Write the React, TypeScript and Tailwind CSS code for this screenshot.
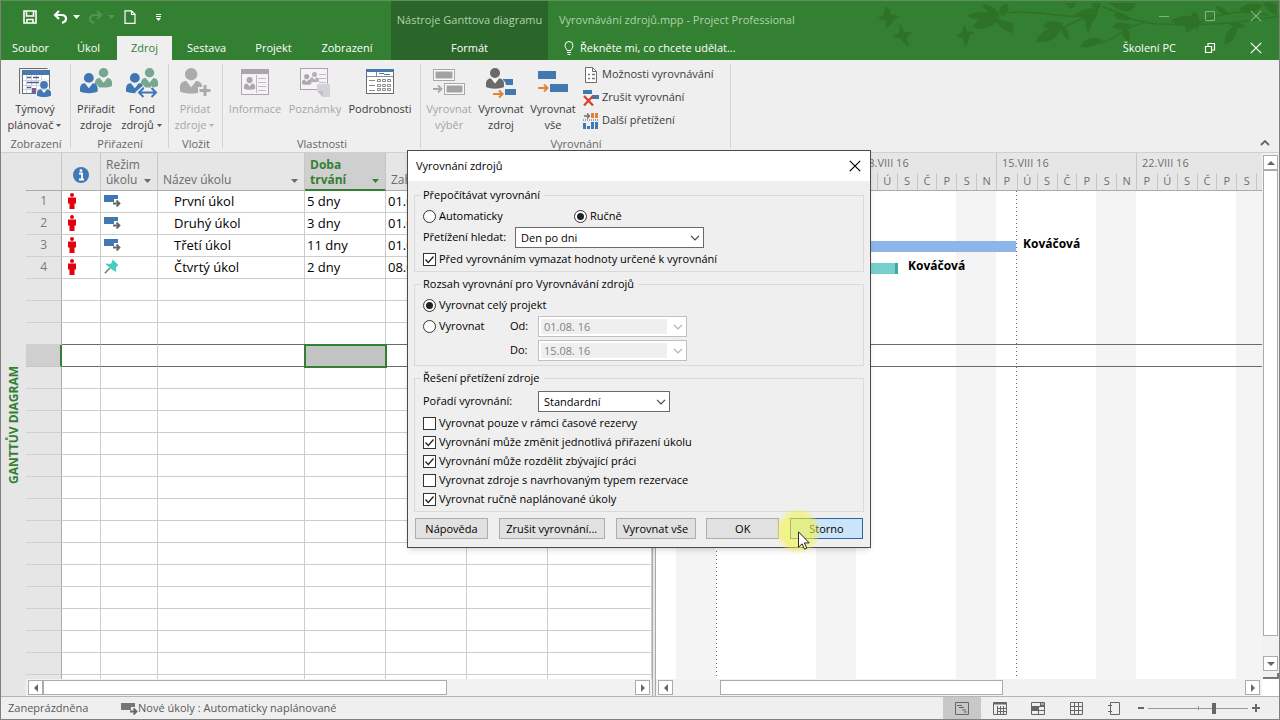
import React from 'react';
import { clsx } from 'clsx';

/* ---------- small glyphs ---------- */

const Caret = ({ className }: { className?: string }) => (
  <svg viewBox="0 0 7 4" className={clsx('h-1 w-[7px] shrink-0 fill-current', className)}>
    <path d="M0 0h7L3.500 4z" />
  </svg>
);

const Chevron = ({ className }: { className?: string }) => (
  <svg viewBox="0 0 10 6" className={clsx('pointer-events-none h-[6px] w-[10px] shrink-0', className)}>
    <path d="M1 .8l4 4 4-4" fill="none" stroke="currentColor" strokeWidth="1.200" />
  </svg>
);

const CloseGlyph = ({ className }: { className?: string }) => (
  <svg viewBox="0 0 12 12" className={clsx('h-3 w-3', className)}>
    <path d="M.8.8l10.400 10.400M11.200.8L.8 11.200" fill="none" stroke="currentColor" strokeWidth="1.200" />
  </svg>
);

/* ---------- ribbon icons ---------- */

const person = (x: number, y: number, fill: string, scale = 1) => (
  <g transform={`translate(${x} ${y}) scale(${scale})`} fill={fill}>
    <circle cx="9" cy="5" r="5" />
    <path d="M0 19v-3.500c0-3 2-5 5-5l4 5 4-5c3 0 5 2 5 5V19c-5 2.200-13 2.200-18 0z" />
  </g>
);

const TeamPlannerIcon = () => (
  <svg viewBox="0 0 32 32" className="h-8 w-8">
    <path d="M.5 27V1.500h28" fill="none" stroke="#6d6d6d" />
    <rect x="3.500" y="3.500" width="27" height="23" fill="#fff" stroke="#6d6d6d" />
    <rect x="3" y="3" width="28" height="5" fill="#4a78ae" />
    <path d="M7.500 8v18M12.500 8v18M17.500 8v18M22.500 8v18M4 13.500h26M4 18.500h26M4 22.500h26" stroke="#d0d0d8" />
    <path d="M8 10.500h4M14 10.500h6M8 15.500h9M8 20.500h4M14 15.500h6" stroke="#4a5f95" strokeWidth="1.500" />
    <rect x="13" y="21" width="4" height="5" fill="#7b5c99" />
    {person(17, 12, '#efefef', 0.9)}
    {person(18, 14, '#4178b5', 0.78)}
  </svg>
);

const AssignIcon = () => (
  <svg viewBox="0 0 32 32" className="h-8 w-8">
    {person(15, 1, '#76a78f', 0.95)}
    {person(-1, 5, '#efefef', 1.120)}
    {person(0, 6, '#3f76b5', 0.98)}
  </svg>
);

const PoolIcon = () => (
  <svg viewBox="0 0 32 32" className="h-8 w-8">
    {person(15, 1, '#76a78f', 0.95)}
    {person(-1, 5, '#efefef', 1.120)}
    {person(0, 6, '#3f76b5', 0.98)}
    <path d="M9 25.500l8-7v4h8v-4l7 7-7 6.500v-3.500h-8V32z" fill="#efefef" />
    <path d="M17.500 21L13 25.500l4.500 4.500M13.500 25.500h16M25.500 21l4.500 4.500-4.500 4.500" fill="none" stroke="#3f76b5" strokeWidth="2" />
  </svg>
);

const AddResourceIcon = () => (
  <svg viewBox="0 0 32 32" className="h-8 w-8">
    {person(1, 1, '#ababab', 1.240)}
    <path d="M19 20h4v-4h6v4h3v6h-3v4h-6v-4h-4z" fill="#efefef" />
    <path d="M24.500 18h3v4h4v3h-4v4h-3v-4h-4v-3h4z" fill="#ababab" />
  </svg>
);

const InfoCardIcon = () => (
  <svg viewBox="0 0 32 32" className="h-8 w-8">
    <rect x="2.500" y="2.500" width="27" height="25" fill="#f7f1f8" stroke="#aca5ad" />
    <rect x="2" y="2" width="28" height="5" fill="#aaa5ab" />
    {person(5, 10, '#aaa', 0.62)}
    <path d="M17.500 8v18" stroke="#bbb" />
    <path d="M19 11.500h8M19 15.500h8M19 19.500h8M19 23.500h8" stroke="#c4bcc5" />
  </svg>
);

const NotesIcon = () => (
  <svg viewBox="0 0 32 32" className="h-8 w-8">
    <rect x="1.500" y="1.500" width="27" height="21" fill="#f7f1f8" stroke="#aca5ad" />
    {person(11, 5, '#b2b2b2', 0.5)}
    {person(3, 7, '#aaa', 0.52)}
    <path d="M20 7.500h7M20 11.500h7M20 15.500h7" stroke="#c4bcc5" />
    <path d="M18 17h13v13h-7l-6-6z" fill="#d4d2d8" />
    <path d="M18 24h6v6z" fill="#c2c0c7" />
  </svg>
);

const DetailsIcon = () => (
  <svg viewBox="0 0 32 32" className="h-8 w-8">
    <rect x="2.500" y="2.500" width="27" height="24" fill="#fff" stroke="#6d6d6d" />
    <rect x="2" y="2" width="28" height="3" fill="#4a78ae" />
    <path d="M3 9.500h26M12.500 5v4" stroke="#8a8a8a" />
    <path d="M15 6.500h5M20 7.500h6" stroke="#4a78ae" />
    <path d="M5 13.500h6M5 18.500h6M5 23.500h6" stroke="#8a8a8a" />
    <path d="M13.500 12.500h3v2h-3zM18.500 12.500h3v2h-3zM23.500 12.500h3v2h-3zM13.500 17.500h3v2h-3zM18.500 17.500h3v2h-3zM23.500 17.500h3v2h-3zM13.500 21.500h3v2h-3zM18.500 21.500h3v2h-3zM23.500 21.500h3v2h-3z" fill="none" stroke="#8a8a8a" />
  </svg>
);

const LevelSelectionIcon = () => (
  <svg viewBox="0 0 32 32" className="h-8 w-8">
    <g fill="#fafafa" stroke="#a8a8a8">
      <rect x=".5" y="2.500" width="21" height="11" />
      <rect x="11.500" y="16.500" width="20" height="11" />
    </g>
    <path d="M2.500 4.500h17v7h-17zM13.500 18.500h16v7h-16z" fill="#a3a3a3" />
    <path d="M0 22h8M5 18.500L8.500 22 5 25.500" fill="none" stroke="#a8a8a8" strokeWidth="1.800" />
  </svg>
);

const LevelResourceIcon = () => (
  <svg viewBox="0 0 32 32" className="h-8 w-8">
    <path d="M18 12h10v6H18zM20 22h11v6H20z" fill="#4178b0" />
    {person(1, 1, '#efefef', 1.100)}
    {person(1, 1, '#6a6a6a', 1)}
    <path d="M7 12h6l-3 4z" fill="#fff" />
    <path d="M8 27h9M14 23.500l3.500 3.500-3.500 3.500" fill="none" stroke="#df8437" strokeWidth="2" />
  </svg>
);

const LevelAllIcon = () => (
  <svg viewBox="0 0 32 32" className="h-8 w-8">
    <path d="M1 4h18v8H1zM13 17h18v8H13z" fill="#4178b0" />
    <path d="M1 21h9M7 17.500l3.500 3.500L7 24.500" fill="none" stroke="#df8437" strokeWidth="2" />
  </svg>
);

const OptionsIcon = () => (
  <svg viewBox="0 0 16 16" className="h-4 w-4">
    <path d="M2.500.5h7l4 4v11h-11z" fill="#fff" stroke="#6d6d6d" />
    <path d="M9.500.5v4h4" fill="none" stroke="#6d6d6d" />
    <path d="M5 7.500h2M5 11.500h2M9 7.500h3M9 11.500h3" stroke="#777" strokeWidth="1.500" />
  </svg>
);

const ClearLevelingIcon = () => (
  <svg viewBox="0 0 16 16" className="h-4 w-4">
    <path d="M0 0h9v4H0zM9 5h7v4H9z" fill="#4178b0" />
    <path d="M1 6l9 9.500M10 6l-9 9.500" stroke="#d2402e" strokeWidth="2.200" />
  </svg>
);

const OverallocationIcon = () => (
  <svg viewBox="0 0 16 16" className="h-4 w-4">
    <path d="M1 3h5M4 .5L6.500 3 4 5.500" fill="none" stroke="#6d6d6d" strokeWidth="1.300" />
    <path d="M8 0h3v5H8zM12 0h3v5h-3z" fill="#df8437" />
    <path d="M0 7h16" stroke="#555" strokeDasharray="1 1" />
    <path d="M0 10h3v6H0zM4 13h3v3H4zM8 9h3v7H8zM12 9h3v7h-3z" fill="#4178b0" />
  </svg>
);

/* ---------- title bar and tabs ---------- */

const QuickAccess = () => (
  <div className="flex h-8 items-center pl-[22px] text-white">
    <button type="button" aria-label="Uložit" className="w-[30px]">
      <svg viewBox="0 0 14 14" className="h-[14px] w-[14px]">
        <path d="M1 1h12v12H1zM3.500 1v5h7V1M4 13V9.500h6V13" fill="none" stroke="currentColor" strokeWidth="1.600" />
      </svg>
    </button>
    <button type="button" aria-label="Zpět" className="flex w-[35px] items-center gap-[5px]">
      <svg viewBox="0 0 15 14" className="h-[14px] w-[15px]">
        <path d="M2 5h6.500c3 0 4.500 1.400 4.500 3.600s-1.500 3.700-4 4.200M6 1L2 5l4 4" fill="none" stroke="currentColor" strokeWidth="2.200" />
      </svg>
      <Caret className="w-[6px]" />
    </button>
    <button type="button" aria-label="Znovu" disabled className="flex w-9 items-center gap-[5px] text-[#549452]">
      <svg viewBox="0 0 15 14" className="h-[14px] w-[15px]">
        <path d="M13 5H6.500C3.500 5 2 6.400 2 8.600s1.500 3.700 4 4.200M9 1l4 4-4 4" fill="none" stroke="currentColor" strokeWidth="2.200" />
      </svg>
      <Caret className="w-[6px]" />
    </button>
    <button type="button" aria-label="Nový" className="w-[31px]">
      <svg viewBox="0 0 12 14" className="h-[14px] w-3">
        <path d="M1 .8h6.500L11 4.300v9H1zM7.500 1v3.500H11" fill="none" stroke="currentColor" strokeWidth="1.200" />
      </svg>
    </button>
    <button type="button" aria-label="Přizpůsobit panel" className="pt-[2px]">
      <svg viewBox="0 0 7 8" className="h-2 w-[7px]">
        <path d="M1 .5h5M1 2.500h5" stroke="currentColor" />
        <path d="M1 4h5L3.500 7z" fill="currentColor" />
      </svg>
    </button>
  </div>
);

const TABS = [
  { label: 'Soubor', width: 'w-[59px]' },
  { label: 'Úkol', width: 'w-[57px]' },
  { label: 'Zdroj', width: 'w-[55px]', active: true },
  { label: 'Sestava', width: 'w-[69px]' },
  { label: 'Projekt', width: 'w-[65px]' },
  { label: 'Zobrazení', width: 'w-[82px]' },
];

// leafy branch with three birds behind the window buttons
const Foliage = () => (
  <svg viewBox="0 0 410 48" className="pointer-events-none absolute top-0 right-0 h-12 w-[410px]" fill="#2d7227">
    <g stroke="none">
      <path d="M15 5c5 2 7 6 7 9 4-1 6 1 9 2-3 1-5 1-6 3-1 4-4 6-9 8 1-3 2-6 0-8-3 0-5-1-7-3 3 0 5-1 6-3 1-3 1-5 0-8z" />
      <path d="M29 23c3 1 6 4 6 8 3 0 6 0 9 1-4 1-6 3-6 5 0 3 1 6 3 8-5-1-8-4-9-7-3 0-6-1-9-4 4 0 6-1 7-3 1-3 0-5-1-8z" />
      <path d="M94 24c3 1 4 4 4 7 3-1 6 0 8 1-3 1-5 2-6 4 0 4-1 7-5 10 1-4 0-7-2-9-3 0-5-2-7-4 3 1 6 0 7-2 1-2 1-4 1-7z" />
      <path d="M98 15c8-5 20-6 32 1-12 3-24 4-32-1z" />
      <path d="M104 26c4-9 14-11 26-9-6 8-14 14-26 9z" />
      <path d="M113 3c9 0 15 5 18 13-10-1-15-6-18-13z" />
      <path d="M130 12c1-8 5-10 9-9 2 6-1 10-6 12z" />
      <path d="M126 18c8 0 17 4 19 12-7 2-15-3-19-12zM138 20l6 2-1 13-4-7z" />
      <path d="M167 41c2-9 12-16 26-14-5 9-12 16-26 14z" />
      <path d="M174 26c4-7 12-7 20-3-3 5-12 7-20 3zM192 24c7 2 8 8 8 15-6-4-9-9-8-15z" />
      <path d="M205 15c8-8 19-9 24-6 0 9-7 10-9 23-5-6-2-12-6-16z" />
      <path d="M211 46c4-9 14-11 23-7-6 6-13 8-23 7z" />
      <path d="M195 2h12c1 2-3 5-6 6-1-3-3-4-6-6zM222 2h10c0 4-3 7-6 9z" />
      <path d="M240 2h27c0 3-2 6-6 8-8 1-14-2-21-8zM244 14c6-4 13-1 18 5-8 1-14 0-18-5z" />
      <path d="M243 26c4-6 12-5 20-2-4 5-12 7-20 2zM254 27c8 2 8 6 6 14-6-4-8-9-6-14z" />
      <path d="M302 20c8-7 20-6 28-2-8 8-20 9-28 2zM325 10c6 5 7 10 3 18-6-4-8-12-3-18zM316 24c4-3 8-5 12-4-2 6-5 10-11 12z" />
      <path d="M346 4c8 2 12 5 14 10-8 0-12-4-14-10zM370 9c5-6 13-8 23-5-4 7-13 10-23 5z" />
      <path d="M356 44c-2-9 2-16 12-20 1 9-3 16-12 20zM360 23c7-2 12-1 17 2-5 3-11 3-17-2z" />
      <path d="M394 2c6-1 11 0 14 2v10c-7-2-12-7-14-12z" />
    </g>
    <g fill="none" stroke="#2d7227" strokeWidth="1.500">
      <path d="M140 12c30-4 50 6 84 3M193 27c8-4 14-6 24-12" />
      <path d="M234 6c20 6 30 16 56 17 40 2 80 0 120-8M231 42c18-4 22-16 44-20" />
      <path d="M330 22c20-10 40-14 70-8" />
    </g>
  </svg>
);

const Header = () => (
  <header className="relative flex h-[60px] shrink-0 border-t border-[#5f8f5f] bg-[#338032] text-[11px] text-white">
    <div className="flex w-[390px] shrink-0 flex-col justify-between">
      <QuickAccess />
      <nav className="flex h-6">
        {TABS.map((tab) => (
          <button
            key={tab.label}
            type="button"
            className={clsx(tab.width, 'h-6 text-center', tab.active && 'bg-[#efefef] text-[#338032]')}
          >
            {tab.label}
          </button>
        ))}
      </nav>
    </div>
    <div className="flex w-[157px] shrink-0 flex-col justify-between bg-[#2a662a]">
      <div className="flex h-[35px] items-center justify-center pt-[3px] whitespace-nowrap text-[#b3d0ae]">Nástroje Ganttova diagramu</div>
      <button type="button" className="h-6">Formát</button>
    </div>
    <div className="relative flex min-w-0 flex-1 flex-col justify-between pl-[11px]">
      <Foliage />
      <div className="relative flex h-[35px] items-center justify-between pt-[3px]">
        <h1 className="whitespace-nowrap text-[#b3d0ae]">Vyrovnávání zdrojů.mpp - Project Professional</h1>
        <div className="flex items-center gap-[34px] pr-[17px] pb-2 text-[#86b384]">
          <button type="button" aria-label="Minimalizovat" className="h-3 w-3">
            <svg viewBox="0 0 12 12" className="h-3 w-3">
              <path d="M1 6.500h10" stroke="currentColor" />
            </svg>
          </button>
          <button type="button" aria-label="Maximalizovat" className="h-3 w-3">
            <svg viewBox="0 0 12 12" className="h-3 w-3">
              <path d="M1.500 1.500h9v9h-9z" fill="none" stroke="currentColor" />
            </svg>
          </button>
          <button type="button" aria-label="Zavřít" className="h-3 w-3">
            <CloseGlyph />
          </button>
        </div>
      </div>
      <div className="relative flex h-6 items-center justify-between">
        <button type="button" className="flex items-center gap-[6px] pl-[5px]">
          <svg viewBox="0 0 10 14" className="h-[14px] w-[10px]" fill="none" stroke="currentColor">
            <path d="M3 9.500C3 8 1 7 1 4.500a4 4 0 018 0C9 7 7 8 7 9.500zM3 11.500h4M3.500 13.500h3" />
          </svg>
          Řekněte mi, co chcete udělat...
        </button>
        <div className="flex items-center pr-[17px]">
          <span className="pr-7">Školení PC</span>
          <button type="button" aria-label="Obnovit okno" className="mr-[34px] h-3 w-3">
            <svg viewBox="0 0 12 12" className="h-3 w-3" fill="none" stroke="currentColor" strokeWidth="1.200">
              <path d="M1.500 4.500h6v6h-6zM4 4V1.500h6.500V8H8" />
            </svg>
          </button>
          <button type="button" aria-label="Zavřít okno" className="h-3 w-3">
            <CloseGlyph />
          </button>
        </div>
      </div>
    </div>
  </header>
);

/* ---------- ribbon ---------- */

interface BigButtonProps {
  icon: React.ReactNode;
  lines: string[];
  width: string;
  menu?: boolean;
  disabled?: boolean;
}

const BigButton: React.FC<BigButtonProps> = ({ icon, lines, width, menu, disabled }) => (
  <button
    type="button"
    disabled={disabled}
    className={clsx(width, 'flex shrink-0 flex-col items-center pt-[7px] leading-4 whitespace-nowrap', disabled ? 'text-[#a6a6a6]' : 'text-[#3b3b3b]')}
  >
    <span className="pb-[2px]">{icon}</span>
    {lines.map((line, i) => (
      <span key={line} className="flex items-center gap-[2px]">
        {line}
        {menu && i === lines.length - 1 && <Caret className="h-[3px] w-[5px] opacity-80" />}
      </span>
    ))}
  </button>
);

const Group: React.FC<{ label: string; width: string; children: React.ReactNode }> = ({ label, width, children }) => (
  <section className={clsx(width, 'relative flex shrink-0 flex-col justify-between after:absolute after:top-1 after:right-0 after:bottom-1 after:w-px after:bg-[#d2d2d2]')}>
    <div className="flex h-[76px] pl-[2px]">{children}</div>
    <h2 className="h-4 text-center leading-4 text-[#666]">{label}</h2>
  </section>
);

const SmallButton = ({ icon, label }: { icon: React.ReactNode; label: string }) => (
  <button type="button" className="flex h-[23px] items-center gap-[3px] whitespace-nowrap text-[#3b3b3b]">
    {icon}
    {label}
  </button>
);

const Ribbon = () => (
  <div className="flex h-[93px] shrink-0 border-b border-[#d0d0d0] bg-[#efefef] text-[11px]">
    <Group label="Zobrazení" width="w-[70px]">
      <BigButton icon={<TeamPlannerIcon />} lines={['Týmový', 'plánovač']} width="w-16" menu />
    </Group>
    <Group label="Přiřazení" width="w-[98px]">
      <BigButton icon={<AssignIcon />} lines={['Přiřadit', 'zdroje']} width="w-[46px]" />
      <BigButton icon={<PoolIcon />} lines={['Fond', 'zdrojů']} width="w-[46px]" menu />
    </Group>
    <Group label="Vložit" width="w-[54px]">
      <BigButton icon={<AddResourceIcon />} lines={['Přidat', 'zdroje']} width="w-12" menu disabled />
    </Group>
    <Group label="Vlastnosti" width="w-[198px]">
      <BigButton icon={<InfoCardIcon />} lines={['Informace']} width="w-[60px]" disabled />
      <BigButton icon={<NotesIcon />} lines={['Poznámky']} width="w-[60px]" disabled />
      <BigButton icon={<DetailsIcon />} lines={['Podrobnosti']} width="w-[70px]" />
    </Group>
    <Group label="Vyrovnání" width="w-[310px]">
      <BigButton icon={<LevelSelectionIcon />} lines={['Vyrovnat', 'výběr']} width="w-[52px]" disabled />
      <BigButton icon={<LevelResourceIcon />} lines={['Vyrovnat', 'zdroj']} width="w-[52px]" />
      <BigButton icon={<LevelAllIcon />} lines={['Vyrovnat', 'vše']} width="w-[52px]" />
      <div className="flex flex-col pt-[3px] pl-1">
        <SmallButton icon={<OptionsIcon />} label="Možnosti vyrovnávání" />
        <SmallButton icon={<ClearLevelingIcon />} label="Zrušit vyrovnání" />
        <SmallButton icon={<OverallocationIcon />} label="Další přetížení" />
      </div>
    </Group>
    <button type="button" aria-label="Sbalit pás karet" className="ml-auto self-end p-[6px] pr-[9px] text-[#666]">
      <svg viewBox="0 0 10 6" className="h-[6px] w-[10px]">
        <path d="M1 5l4-4 4 4" fill="none" stroke="currentColor" strokeWidth="1.800" />
      </svg>
    </button>
  </div>
);

/* ---------- task sheet ---------- */

interface Task {
  name: string;
  duration: string;
  start: string;
  pinned?: boolean;
}

const TASKS: Task[] = [
  { name: 'První úkol', duration: '5 dny', start: '01.08' },
  { name: 'Druhý úkol', duration: '3 dny', start: '01.08' },
  { name: 'Třetí úkol', duration: '11 dny', start: '01.08' },
  { name: 'Čtvrtý úkol', duration: '2 dny', start: '08.08', pinned: true },
];

const ROW_COUNT = 23;
const SELECTED_ROW = 7;

const OverallocatedIcon = () => (
  <svg viewBox="0 0 8 16" className="h-4 w-2 fill-[#e3000f]">
    <circle cx="4" cy="2" r="2" />
    <path d="M0 4.500h8v6H6.500V16h-5v-5.500H0z" />
  </svg>
);

const AutoModeIcon = ({ className }: { className?: string }) => (
  <svg viewBox="0 0 17 13" className={clsx('h-[13px] w-[17px]', className)}>
    <path d="M0 1h14v4h-4v3H0z" fill="currentColor" />
    <path d="M9 9.500h6M12.500 6.500l3 3-3 3" fill="none" stroke="#666" strokeWidth="1.800" />
  </svg>
);

const PinIcon = () => (
  <svg viewBox="0 0 15 15" className="h-[15px] w-[15px]">
    <path d="M6 9L.8 14.200" stroke="#6b7f7d" strokeWidth="1.600" />
    <path d="M8.500.5l6 5.500-1.500 1-1 2 .3 4L8.500 11 3 6.500l-2-2 5.500.5 1.500-2z" fill="#45cfc0" />
  </svg>
);

const HeadCell: React.FC<{ children?: React.ReactNode; menu?: boolean; active?: boolean }> = ({ children, menu, active }) => (
  <th
    className={clsx(
      'overflow-hidden border-r border-r-[#c6c6c6] p-0 pl-[5px] text-left align-bottom font-normal whitespace-nowrap',
      active ? 'border-b-2 border-b-[#338032] bg-[#cfcfcf] text-[#338032]' : 'border-b border-b-[#ababab] text-[#6b6b6b]',
    )}
  >
    <span className={clsx('flex items-end justify-between pr-[6px] leading-[15px]', active ? 'pb-[2px] font-bold' : 'pb-[3px]')}>
      <span>{children}</span>
      {menu && <Caret className="mb-1" />}
    </span>
  </th>
);

const TaskSheet = () => (
  <div className="h-[527px] overflow-hidden bg-white">
    <table className="w-full table-fixed border-separate border-spacing-0">
      <colgroup>
        <col className="w-9" />
        <col className="w-[39px]" />
        <col className="w-[57px]" />
        <col className="w-[147px]" />
        <col className="w-[81px]" />
        <col className="w-[81px]" />
        <col className="w-[81px]" />
        <col />
      </colgroup>
      <thead className="bg-[#e6e6e6] text-xs">
        <tr className="h-[38px]">
          <HeadCell />
          <th className="border-r border-b border-r-[#c6c6c6] border-b-[#ababab] p-0">
            <svg viewBox="0 0 16 16" className="mx-auto mt-[6px] h-4 w-4" role="img" aria-label="Indikátory">
              <circle cx="8" cy="8" r="8" fill="#4178b5" />
              <path d="M6 6.500h3v6M6 12.500h5" stroke="#fff" strokeWidth="1.800" fill="none" />
              <circle cx="8" cy="3.600" r="1.400" fill="#fff" />
            </svg>
          </th>
          <HeadCell menu>Režim<br />úkolu</HeadCell>
          <HeadCell menu>Název úkolu</HeadCell>
          <HeadCell menu active>Doba<br />trvání</HeadCell>
          <HeadCell>Zahájení</HeadCell>
          <HeadCell />
          <HeadCell />
        </tr>
      </thead>
      <tbody className="text-[13px] text-black">
        {Array.from({ length: ROW_COUNT }, (_, i) => {
          const task = TASKS[i];
          const selected = i === SELECTED_ROW;
          const cell = clsx(
            'overflow-hidden border-r border-b border-r-[#cdcdcd] p-0 pb-[2px] whitespace-nowrap',
            selected || i === SELECTED_ROW - 1 ? 'border-b-[#6a6a6a]' : 'border-b-[#cdcdcd]',
          );
          return (
            <tr key={i} className="h-[22px] leading-[18px]">
              <th
                className={clsx(
                  'border-b p-0 pr-[14px] pb-[2px] text-right text-xs leading-4 font-normal text-[#7a7a7a]',
                  selected ? 'border-r-2 border-r-[#338032] border-b-[#c6c6c6] bg-[#cfcfcf]' : 'border-r border-r-[#ababab] border-b-[#d0d0d0] bg-[#e6e6e6]',
                )}
              >
                {task ? i + 1 : ''}
              </th>
              <td className={clsx(cell, 'pl-[6px]')}>{task && <OverallocatedIcon />}</td>
              <td className={clsx(cell, 'pl-[3px]')}>{task && (task.pinned ? <PinIcon /> : <AutoModeIcon className="text-[#4178b0]" />)}</td>
              <td className={clsx(cell, 'pl-4')}>{task?.name}</td>
              <td className={clsx(cell, 'pl-[2px]', selected && 'bg-[#c3c3c3] outline-2 -outline-offset-1 outline-[#338032]')}>{task?.duration}</td>
              <td className={clsx(cell, 'pl-[2px]')}>{task?.start}</td>
              <td className={cell} />
              <td className={cell} />
            </tr>
          );
        })}
      </tbody>
    </table>
  </div>
);

/* ---------- gantt chart ---------- */

const DAY = 20;
const DAYS = ['P', 'Ú', 'S', 'Č', 'P', 'S', 'N'];
const WEEKS = ['01.VIII 16', '08.VIII 16', '15.VIII 16', '22.VIII 16'];

// offsets are counted in days from the left edge of the chart
const BARS = [
  { row: 0, start: 3, length: 5 },
  { row: 1, start: 3, length: 3 },
  { row: 2, start: 3, length: 15, who: 'Kováčová' },
  { row: 3, start: 10, length: 2.1, who: 'Kováčová', manual: true },
];

const MARKERS = [3, 18];

const DayCells = ({ from = 0, to = 7 }: { from?: number; to?: number }) => (
  <div className="flex h-[17px]">
    {DAYS.slice(from).map((day, i) => (
      <span key={i} className={clsx('w-5 border-[#c6c6c6] text-center leading-[15px]', (i > 0 || from > 0) && 'border-l')}>
        {i + from < to && day}
      </span>
    ))}
  </div>
);

const Gantt = () => (
  <div className="relative flex h-[527px] flex-col overflow-hidden bg-white">
    <div className="flex h-[38px] shrink-0 border-b border-[#ababab] bg-[#e6e6e6] text-[11px] text-[#6f6f6f]">
      <div className="flex w-[60px] shrink-0 flex-col justify-end">
        <DayCells from={4} />
      </div>
      {WEEKS.map((week, i) => (
        <div key={week} className="flex w-[140px] shrink-0 flex-col justify-end border-l border-[#c6c6c6]">
          <span className="pl-[5px] leading-[20px]">{week}</span>
          <DayCells to={i === 3 ? 6 : 7} />
        </div>
      ))}
    </div>
    <div className="relative flex flex-1">
      {/* weekend shading */}
      <div className="w-5 shrink-0" />
      <div className="w-10 shrink-0 bg-[#f4f4f4]" />
      {WEEKS.map((week) => (
        <div key={week} className="flex w-[140px] shrink-0 justify-end">
          <div className="w-10 bg-[#f4f4f4]" />
        </div>
      ))}
      {MARKERS.map((day) => (
        <div
          key={day}
          className="absolute inset-y-0 w-px bg-[repeating-linear-gradient(#666_0_1px,transparent_1px_4px)]"
          style={{ left: day * DAY }}
        />
      ))}
      <div className="absolute inset-0 flex flex-col">
        {Array.from({ length: 22 }, (_, row) => {
          const bar = BARS.find((b) => b.row === row);
          return (
            <div
              key={row}
              className={clsx('flex h-[22px] shrink-0 items-center', (row === SELECTED_ROW || row === SELECTED_ROW - 1) && 'border-b border-[#6a6a6a]')}
            >
              {bar && (
                <>
                  <span
                    className={clsx('h-[11px] shrink-0', bar.manual ? 'border-r-[3px] border-[#3fa9a1] bg-[#76cfcb]' : 'bg-[#8cb6e9]')}
                    style={{ marginLeft: bar.start * DAY, width: bar.length * DAY }}
                  />
                  {bar.who && <span className={clsx('pb-1 text-xs leading-4 font-bold text-black', bar.manual ? 'pl-[10px]' : 'pl-[7px]')}>{bar.who}</span>}
                </>
              )}
            </div>
          );
        })}
      </div>
    </div>
  </div>
);

/* ---------- scroll bars ---------- */

const ScrollButton = ({ label, path }: { label: string; path: string }) => (
  <button type="button" aria-label={label} className="flex h-[15px] w-[15px] shrink-0 items-center justify-center border border-[#ababab] bg-white">
    <svg viewBox="0 0 8 8" className="h-2 w-2 fill-[#666]">
      <path d={path} />
    </svg>
  </button>
);

const HScroll: React.FC<{ thumb: string }> = ({ thumb }) => (
  <div className="flex h-[17px] shrink-0 items-center bg-[#f2f2f2] px-[2px]">
    <ScrollButton label="Doleva" path="M6 0v8L2 4z" />
    <div className="flex flex-1">
      <div className={clsx(thumb, 'h-[15px] border border-[#ababab] bg-white')} />
    </div>
    <ScrollButton label="Doprava" path="M2 0v8l4-4z" />
  </div>
);

const VScroll = () => (
  <div className="flex w-[17px] shrink-0 flex-col items-center bg-[#f2f2f2] pt-[2px]">
    <ScrollButton label="Nahoru" path="M0 6h8L4 2z" />
    <div className="flex w-[15px] flex-1 flex-col">
      <div className="h-[466px] border border-[#ababab] bg-white" />
    </div>
    <ScrollButton label="Dolů" path="M0 2h8L4 6z" />
    <div className="mt-[2px] h-[6px] w-4 border-r-2 border-b-2 border-[#777] bg-[#efefef]" />
    <div className="h-[17px] w-full bg-white" />
  </div>
);

/* ---------- status bar ---------- */

const VIEWS = [
  { label: 'Ganttův diagram', path: 'M1.500 1.500h13v12h-13zM3 4.500h5M5 6.500h5M8 9h4M10 11h3' },
  { label: 'Používání úkolů', path: 'M1.500 1.500h13v12h-13zM1 3h14M5.500 5v9M8.500 5v9M11.500 5v9M5 7.500h10M5 10.500h10M2 2.500h12' },
  { label: 'Týmový plánovač', path: 'M1.500 1.500h13v12h-13zM1 5.500h14M1 9.500h14M10.500 1v5M8.500 6v8M11 3h4M11 4.500h4M2 6.500h6M2 7.500h6M2 8.500h6' },
  { label: 'Seznam zdrojů', path: 'M2.500 1.500h12v12h-12zM2 5.500h12M2 9.500h12M6.500 1v12M10.500 1v12' },
  { label: 'Sestava', path: 'M4.500 1.500h9v12h-9zM2 4.500h4M2 10.500h4' },
];

const StatusBar = () => (
  <footer className="flex h-[23px] shrink-0 items-center border-t border-[#b5b5b5] bg-[#efefef] text-[11px] text-[#5a5a5a]">
    <span className="w-[120px] pl-[7px]">Zaneprázdněna</span>
    <span className="flex items-center">
      <AutoModeIcon className="text-[#777]" />
      Nové úkoly : Automaticky naplánované
    </span>
    <div className="ml-auto flex h-full">
      {VIEWS.map((view, i) => (
        <button
          key={view.label}
          type="button"
          aria-label={view.label}
          className={clsx('flex w-[38px] items-center justify-center', i === 0 && 'bg-[#c8c8c8]')}
        >
          <svg viewBox="0 0 16 15" className="h-[15px] w-4" fill="none" stroke="#666">
            <path d={view.path} />
          </svg>
        </button>
      ))}
    </div>
    <div className="flex items-center gap-1 pr-[19px] pl-[5px] text-[#666]">
      <button type="button" aria-label="Oddálit" className="h-[2px] w-[6px] bg-[#666]" />
      <span className="relative flex items-center">
        <input
          type="range"
          aria-label="Lupa"
          defaultValue={67}
          className="h-3 w-[100px] appearance-none bg-[linear-gradient(#999,#999)] bg-[length:100%_1px] bg-center bg-no-repeat [&::-webkit-slider-thumb]:h-[11px] [&::-webkit-slider-thumb]:w-1 [&::-webkit-slider-thumb]:appearance-none [&::-webkit-slider-thumb]:bg-[#666]"
        />
        <span className="absolute left-1/2 h-1 w-px bg-[#999]" />
      </span>
      <button type="button" aria-label="Přiblížit">
        <svg viewBox="0 0 8 8" className="h-2 w-2">
          <path d="M4 0v8M0 4h8" stroke="currentColor" strokeWidth="2" />
        </svg>
      </button>
    </div>
  </footer>
);

/* ---------- leveling dialog ---------- */

const Radio: React.FC<{ name: string; label: string; checked?: boolean; width?: string }> = ({ name, label, checked, width }) => (
  <label className={clsx('flex items-center gap-[3px]', width)}>
    <input
      type="radio"
      name={name}
      defaultChecked={checked}
      className="grid size-[13px] appearance-none place-content-center rounded-full border border-[#333] bg-white checked:before:size-[7px] checked:before:rounded-full checked:before:bg-[#222] checked:before:content-['']"
    />
    {label}
  </label>
);

const Check: React.FC<{ label: string; checked?: boolean }> = ({ label, checked }) => (
  <label className="flex h-[19px] items-center gap-[3px]">
    <span className="relative flex">
      <input type="checkbox" defaultChecked={checked} className="peer size-[13px] appearance-none border border-[#333] bg-white" />
      <svg viewBox="0 0 13 13" className="pointer-events-none absolute inset-0 hidden size-[13px] peer-checked:block">
        <path d="M2.500 6.500l2.800 3 5.200-6" fill="none" stroke="#222" strokeWidth="1.300" />
      </svg>
    </span>
    {label}
  </label>
);

const Select: React.FC<{ id: string; value: string; width: string }> = ({ id, value, width }) => (
  <span className={clsx('relative flex items-center', width)}>
    <select id={id} className="h-[21px] w-full appearance-none border border-[#6a6a6a] bg-white pl-[5px] leading-[18px]">
      <option>{value}</option>
    </select>
    <Chevron className="absolute right-1 text-[#444]" />
  </span>
);

const DateSelect: React.FC<{ id: string; label: string; value: string }> = ({ id, label, value }) => (
  <>
    <label htmlFor={id} className="w-7">{label}</label>
    <span className="flex h-[21px] w-[149px] items-center border border-[#c0c0c0] bg-white px-[2px] text-[#b0b0b0]">
      <select id={id} disabled className="h-[15px] flex-1 appearance-none bg-[#efefef] pl-[3px] leading-[15px] text-[#848484] opacity-100">
        <option>{value}</option>
      </select>
      <Chevron className="mr-[1px] ml-[6px]" />
    </span>
  </>
);

const Panel: React.FC<{ title: string; children: React.ReactNode }> = ({ title, children }) => (
  <fieldset className="border border-[#dadada] px-2">
    <legend className="-ml-[2px] pr-1 pl-[2px] leading-4">{title}</legend>
    {children}
  </fieldset>
);

const dialogButton = 'h-[21px] border border-[#adadad] bg-[#e1e1e1] text-center leading-[18px] whitespace-nowrap';

const LevelingDialog = () => (
  <div role="dialog" aria-labelledby="dlg-title" className="w-[464px] border border-[#4a4a4a] bg-[#efefef] text-[11px] text-black shadow-md">
    <div className="flex h-[30px] items-center justify-between bg-white pr-[9px] pl-2">
      <h2 id="dlg-title">Vyrovnání zdrojů</h2>
      <button type="button" aria-label="Zavřít dialog">
        <CloseGlyph />
      </button>
    </div>
    <form className="flex flex-col px-[6px] pt-[6px] pb-2" onSubmit={(e) => e.preventDefault()}>
      <div className="flex flex-col gap-1">
        <Panel title="Přepočítávat vyrovnání">
          <div className="mt-[3px] flex h-5 items-center">
            <Radio name="calc" label="Automaticky" width="w-[151px]" />
            <Radio name="calc" label="Ručně" checked />
          </div>
          <div className="mt-[1px] flex items-center">
            <label htmlFor="look" className="w-[92px]">Přetížení hledat:</label>
            <Select id="look" value="Den po dni" width="w-[189px]" />
          </div>
          <div className="pt-[2px] pb-[2px]">
            <Check label="Před vyrovnáním vymazat hodnoty určené k vyrovnání" checked />
          </div>
        </Panel>
        <Panel title="Rozsah vyrovnání pro Vyrovnávání zdrojů">
          <div className="mt-[3px] flex h-5 items-center">
            <Radio name="range" label="Vyrovnat celý projekt" checked />
          </div>
          <div className="mt-[1px] flex items-center">
            <Radio name="range" label="Vyrovnat" width="w-[87px]" />
            <DateSelect id="from" label="Od:" value="01.08. 16" />
          </div>
          <div className="mt-[3px] mb-1 flex items-center pl-[87px]">
            <DateSelect id="to" label="Do:" value="15.08. 16" />
          </div>
        </Panel>
        <Panel title="Řešení přetížení zdroje">
          <div className="mt-[5px] mb-[2px] flex items-center">
            <label htmlFor="order" className="w-[115px]">Pořadí vyrovnání:</label>
            <Select id="order" value="Standardní" width="w-[132px]" />
          </div>
          <div className="pb-[2px]">
            <Check label="Vyrovnat pouze v rámci časové rezervy" />
            <Check label="Vyrovnání může změnit jednotlivá přiřazení úkolu" checked />
            <Check label="Vyrovnání může rozdělit zbývající práci" checked />
            <Check label="Vyrovnat zdroje s navrhovaným typem rezervace" />
            <Check label="Vyrovnat ručně naplánované úkoly" checked />
          </div>
        </Panel>
      </div>
      <div className="mt-[6px] flex justify-between px-[1px]">
        <button type="button" className={clsx(dialogButton, 'w-[73px]')}>Nápověda</button>
        <button type="button" className={clsx(dialogButton, 'w-[106px]')}>Zrušit vyrovnání...</button>
        <button type="button" className={clsx(dialogButton, 'w-20')}>Vyrovnat vše</button>
        <button type="submit" className={clsx(dialogButton, 'w-[73px]')}>OK</button>
        <span className="relative">
          <button type="button" className="h-[21px] w-[73px] border border-[#2a66a0] bg-[#cce4f7] text-center leading-[18px]">Storno</button>
          {/* pointer with its click highlight */}
          <span className="pointer-events-none absolute top-[-10px] left-[-15px] size-[46px] rounded-full bg-[radial-gradient(circle,rgba(244,244,70,.6)_50%,rgba(244,244,100,0)_72%)]" />
          <svg viewBox="0 0 12 19" className="pointer-events-none absolute top-[13px] left-2 h-[19px] w-3">
            <path d="M.5.8v15.400l3.600-3.400 2.400 5.400 2.300-1-2.400-5.300h4.800z" fill="#fff" stroke="#111" strokeWidth=".9" />
          </svg>
        </span>
      </div>
    </form>
  </div>
);

/* ---------- window ---------- */

export default function App() {
  return (
    <div className="relative flex h-screen min-h-[640px] flex-col overflow-hidden border-x border-b border-[#808080] bg-[#e6e6e6] font-['Open_Sans','Noto_Sans',sans-serif]">
      <Header />
      <Ribbon />
      <main className="flex min-h-0 flex-1">
        <div className="flex w-[25px] shrink-0 items-center justify-center">
          <span className="rotate-180 text-xs font-bold whitespace-nowrap text-[#338032] [writing-mode:vertical-rl]">GANTTŮV DIAGRAM</span>
        </div>
        <div className="flex min-w-0 flex-[626_0_0] flex-col">
          <TaskSheet />
          <HScroll thumb="w-[404px]" />
        </div>
        <div className="w-1 shrink-0 border-x border-[#ababab] bg-[#e6e6e6]" />
        <div className="flex min-w-0 flex-[606_0_0] flex-col">
          <Gantt />
          <HScroll thumb="ml-[47px] w-[283px]" />
        </div>
        <VScroll />
      </main>
      <StatusBar />
      <div className="pointer-events-none absolute inset-x-0 top-[150px] flex justify-center pr-[2px]">
        <div className="pointer-events-auto">
          <LevelingDialog />
        </div>
      </div>
    </div>
  );
}
